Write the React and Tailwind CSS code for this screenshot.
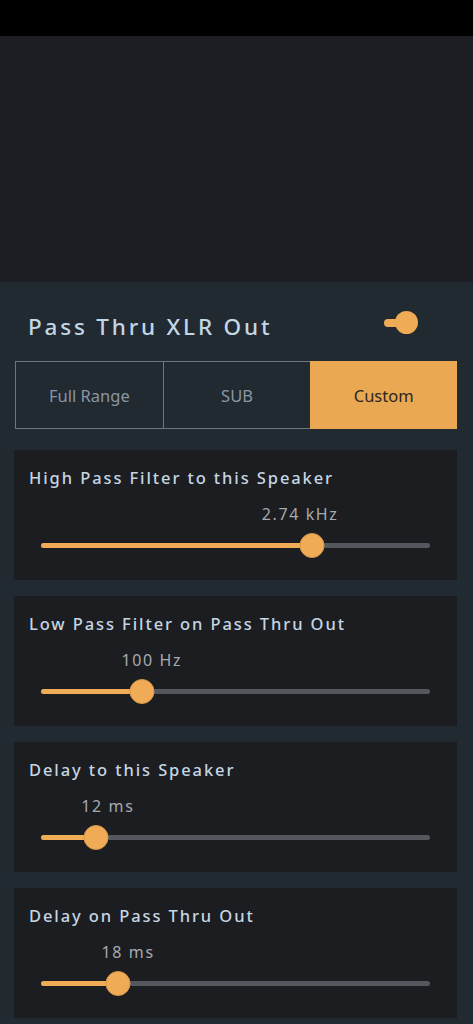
import { useState } from "react";

const sliders = [
  { title: "High Pass Filter to this Speaker", value: "2.74 kHz", pos: 69.7, label: 66.6 },
  { title: "Low Pass Filter on Pass Thru Out", value: "100 Hz", pos: 26, label: 28.5 },
  { title: "Delay to this Speaker", value: "12 ms", pos: 14.1, label: 17.2 },
  { title: "Delay on Pass Thru Out", value: "18 ms", pos: 19.8, label: 22.4 },
];

function SliderCard({ title, value, pos, label }) {
  return (
    <div className="bg-[#1b1d21] h-[130px] px-[15px] pt-[17px]">
      <div className="text-[16.5px] leading-[22px] tracking-[1.9px] font-medium text-[#c6d5e2]">{title}</div>
      <div className="relative mx-[12px] mt-[15px] h-[24px]">
        <span
          className="absolute top-0 -translate-x-1/2 whitespace-nowrap text-[16px] leading-[20px] tracking-[1.6px] text-[#a6aaae]"
          style={{ left: `${label}%` }}
        >
          {value}
        </span>
      </div>
      <div className="relative mx-[12px] mt-[5px] h-[24px] flex items-center">
        <div className="w-full h-[5px] rounded-full bg-[#54585e]" />
        <div
          className="absolute left-0 h-[5px] rounded-full bg-[#efab55]"
          style={{ width: `${pos}%` }}
        />
        <div
          className="absolute w-[25px] h-[25px] -translate-x-1/2 rounded-full bg-[#efab55] border border-[#d8974a]"
          style={{ left: `${pos}%` }}
        />
      </div>
    </div>
  );
}

export default function App() {
  const [mode, setMode] = useState("Custom");
  const modes = ["Full Range", "SUB", "Custom"];

  return (
    <div className="w-[473px] h-[1024px] overflow-hidden bg-[#212931] font-['Noto_Sans',sans-serif]">
      <div className="h-[36px] bg-black" />
      <div className="h-[246px] bg-[#1c1e23]" />

      <div className="pl-[14px] pr-[16px]">
        {/* Header */}
        <div className="flex items-center justify-between h-[79px] pl-[14px] pr-[39px] pt-[10px]">
          <span className="text-[22.5px] tracking-[2.8px] font-medium text-[#c3d6e6]">Pass Thru XLR Out</span>
          <div className="relative w-[34px] h-[24px] flex items-center -mt-[8px]">
            <div className="w-[24px] h-[8px] rounded-full bg-[#efab55]" />
            <div className="absolute right-0 w-[23px] h-[23px] rounded-full bg-[#efab55]" />
          </div>
        </div>

        {/* Segmented control */}
        <div className="flex h-[68px] ml-[1px]">
          {modes.map((m) => (
            <button
              key={m}
              onClick={() => setMode(m)}
              className={
                mode === m
                  ? "flex-1 bg-[#eaa853] text-[#2b2620] text-[16.5px] pt-[3px]"
                  : "flex-1 border border-[#6b7786] -mr-px text-[#8a96a2] text-[16.5px] pt-[3px]"
              }
            >
              {m}
            </button>
          ))}
        </div>

        {/* Slider cards */}
        <div className="mt-[21px] flex flex-col gap-[16px]">
          {sliders.map((s) => (
            <SliderCard key={s.title} {...s} />
          ))}
        </div>
      </div>
    </div>
  );
}
